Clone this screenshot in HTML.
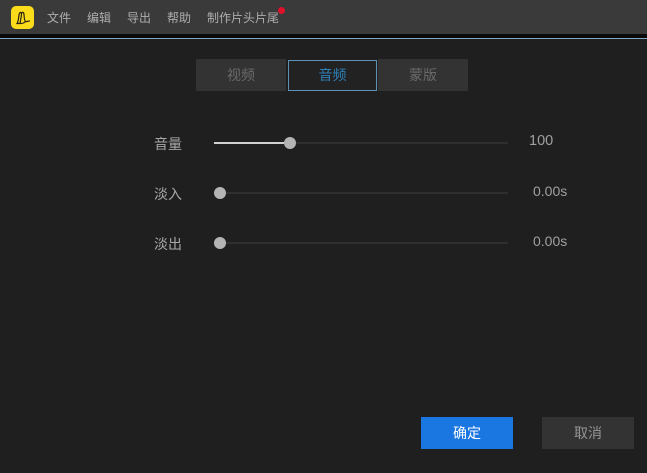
<!DOCTYPE html>
<html>
<head>
<meta charset="utf-8">
<style>
html,body{margin:0;padding:0;}
body{width:647px;height:473px;position:relative;overflow:hidden;background:#1f1f1f;font-family:"Liberation Sans","Noto Sans CJK SC",sans-serif;}
.a{position:absolute;white-space:nowrap;}
.m{top:10px;font-size:12px;line-height:16px;color:#adadad;}
.lab{left:154px;font-size:14px;line-height:18px;color:#a8a8a8;}
.val{font-size:14px;line-height:18px;color:#a0a0a0;}
.tr{left:214px;width:294px;height:2px;background:#2f2f2f;}
.th{width:12px;height:12px;border-radius:50%;background:#b4b4b4;}
.tab{top:59px;height:32px;line-height:32px;text-align:center;font-size:14px;background:#333333;color:#6a6a6a;}
</style>
</head>
<body>
<div class="a" style="left:0;top:0;width:647px;height:34px;background:#3a3a3a;"></div>
<div class="a" style="left:0;top:34px;width:647px;height:4px;background:#0a0a0a;"></div>
<div class="a" style="left:0;top:38px;width:647px;height:1px;background:#7fa6c4;"></div>
<div class="a" style="left:11px;top:6px;width:23px;height:23px;border-radius:5px;background:#fbdc1b;"></div>
<svg class="a" style="left:11px;top:6px;" width="23" height="23" viewBox="0 0 23 23" fill="none" stroke="#2a2410" stroke-width="1.200"><path d="M6 17.500 C7.500 15.500 7.500 12 8 9 C8.500 6 10 5.500 10.500 8 C11 5.500 12.800 5.800 13 8.500 C13.200 11.500 13.200 14 14.500 15.500 C13 17 11.500 17.500 10 17.500 Z"/><path d="M10.500 8 C10.300 11 9.500 14.500 9 17.500"/><path d="M14.500 15.500 C16 16 17.500 15 19 14.800"/></svg>
<div class="a m" style="left:47px;">文件</div>
<div class="a m" style="left:87px;">编辑</div>
<div class="a m" style="left:127px;">导出</div>
<div class="a m" style="left:167px;">帮助</div>
<div class="a m" style="left:207px;">制作片头片尾</div>
<div class="a" style="left:277.500px;top:6.500px;width:7px;height:7px;border-radius:50%;background:#e0102a;"></div>

<div class="a tab" style="left:196px;width:90px;">视频</div>
<div class="a tab" style="left:288px;top:60px;width:87px;height:29px;line-height:29px;background:#222222;border:1px solid #5f93b5;color:#2f7fb5;">音频</div>
<div class="a tab" style="left:378px;width:90px;">蒙版</div>

<div class="a lab" style="top:135px;">音量</div>
<div class="a tr" style="top:142px;"></div>
<div class="a" style="left:214px;top:142px;width:70px;height:2px;background:#d0d0d0;"></div>
<div class="a th" style="left:284px;top:137px;"></div>
<div class="a val" style="left:529px;top:132px;font-size:14.500px;">100</div>

<div class="a lab" style="top:185px;">淡入</div>
<div class="a tr" style="top:192px;"></div>
<div class="a th" style="left:214px;top:187px;"></div>
<div class="a val" style="left:533px;top:182px;">0.00s</div>

<div class="a lab" style="top:235px;">淡出</div>
<div class="a tr" style="top:242px;"></div>
<div class="a th" style="left:214px;top:237px;"></div>
<div class="a val" style="left:533px;top:232px;">0.00s</div>

<div class="a" style="left:421px;top:417px;width:92px;height:32px;line-height:32px;text-align:center;font-size:14px;background:#1a76e0;color:#ffffff;">确定</div>
<div class="a" style="left:542px;top:417px;width:92px;height:32px;line-height:32px;text-align:center;font-size:14px;background:#333333;color:#949494;">取消</div>
</body>
</html>
